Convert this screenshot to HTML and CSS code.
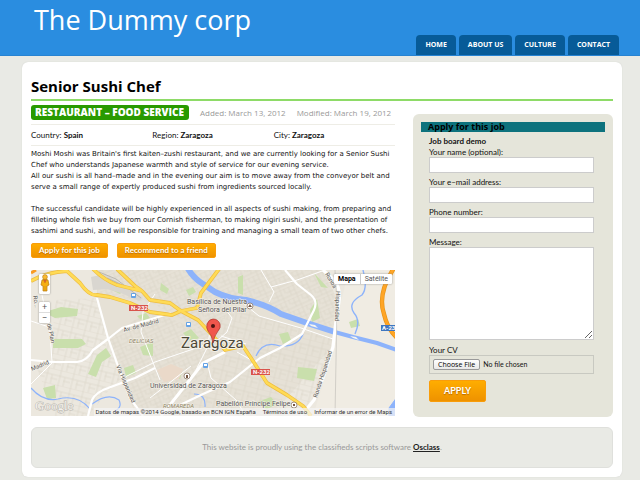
FILE: index.html
```html
<!doctype html>
<html lang="en">
<head>
    <meta charset="UTF-8">
    <meta name="viewport" content="width=device-width, initial-scale=1.0">
    <title>Senior Sushi Chef - The Dummy corp</title>
    <link rel="stylesheet" href="styles.css">
</head>
<body>
    <div class="header">
        <a class="logo" href="#">The Dummy corp</a>
        <nav class="nav">
            <a href="#">HOME</a>
            <a href="#">ABOUT US</a>
            <a href="#">CULTURE</a>
            <a href="#">CONTACT</a>
        </nav>
    </div>

    <div class="wrapper">
        <h1 class="title">Senior Sushi Chef</h1>
        <div class="columns">
            <div class="main">
                <div class="meta">
                    <strong class="category">RESTAURANT – FOOD SERVICE</strong>
                    <span>Added: March 13, 2012</span>
                    <span>Modified: March 19, 2012</span>
                </div>
                <div class="location">
                    <span>Country: <strong>Spain</strong></span>
                    <span>Region: <strong>Zaragoza</strong></span>
                    <span>City: <strong>Zaragoza</strong></span>
                </div>
                <div class="description">
                    <p>Moshi Moshi was Britain's first kaiten–zushi restaurant, and we are currently looking for a Senior Sushi<br>Chef who understands Japanese warmth and style of service for our evening service.<br>All our sushi is all hand–made and in the evening our aim is to move away from the conveyor belt and<br>serve a small range of expertly produced sushi from ingredients sourced locally.</p>
                    <p>The successful candidate will be highly experienced in all aspects of sushi making, from preparing and<br>filleting whole fish we buy from our Cornish fisherman, to making nigiri sushi, and the presentation of<br>sashimi and sushi, and will be responsible for training and managing a small team of two other chefs.</p>
                </div>
                <div class="actions">
                    <button class="btn" type="button">Apply for this job</button>
                    <button class="btn" type="button">Recommend to a friend</button>
                </div>

                <div class="map">
                    <svg class="map-canvas" viewBox="0 0 364 146" preserveAspectRatio="xMidYMid slice">
                        <defs>
                            <pattern id="blocks" width="14" height="12" patternUnits="userSpaceOnUse" patternTransform="rotate(-24)">
                                <path d="M0 0H14M0 5H9M0 9H14M4 0V9M9 0V12M13 0V5" fill="none" stroke="#d8d2c4" stroke-width=".6"/>
                            </pattern>
                            <pattern id="blocks2" width="13" height="15" patternUnits="userSpaceOnUse" patternTransform="rotate(14)">
                                <path d="M0 0H13M0 6H13M6 10H13M2 0V15M7 6V15" fill="none" stroke="#d8d2c4" stroke-width=".6"/>
                            </pattern>
                        </defs>
                        <rect width="364" height="146" fill="#ece8df"/>
                        <path d="M66 28L77 67L104 135V146H240L300 78L306 30L294 0H66Z" fill="#e6e1d6"/>
                        <path d="M66 0H294L306 30L300 60L206 30L182 66L119 32L66 24Z M77 67L119 40L182 66L196 80L129 146H105Z" fill="url(#blocks)"/>
                        <path d="M200 36L302 68L294 105L274 140L250 123L225 90L196 80L182 62Z M24 30L66 28L77 67L91 108L80 118L20 95Z M132 146L196 84L215 80L248 124L260 146Z M5 96L60 94L80 118L57 146H24Z" fill="url(#blocks2)"/>
                        <path d="M308 40L318 0H364V146H282L302 80Z" fill="#f0ece3"/>

                        <g fill="#c9dfac">
                            <path d="M17 41L30 37L47 39L46 46L24 48L16 44Z"/>
                            <path d="M22 69H51L55 74L47 78H22Z"/>
                            <path d="M66 85L75 78L80 86L71 92L65 107L57 104Z"/>
                            <path d="M74 10L92 20L89 24L72 16Z"/>
                            <path d="M106 46L115 43L119 48L111 51Z"/>
                            <path d="M109 77L122 72L122 86L112 85Z"/>
                            <path d="M93 98L102 95L105 103L95 107Z"/>
                            <path d="M130 13L138 19L136 24L129 20Z"/>
                            <path d="M155 20L162 17L165 22L158 26Z"/>
                            <path d="M152 63L160 59L168 68L160 72Z"/>
                            <path d="M207 7L212 5V25L207 23Z"/>
                            <path d="M279 40L286 29L289 48L281 52Z"/>
                            <path d="M248 64L257 62L260 70L252 74Z"/>
                            <path d="M267 97L286 99L283 111L266 108Z"/>
                            <path d="M283 3L297 18L290 17Z"/>
                            <path d="M142 103L151 102L149 109L141 108Z"/>
                            <path d="M12 118L24 115L25 128L16 129Z"/>
                            <path d="M318 52L327 49L329 56L320 58Z"/>
                            <path d="M226 132L240 127L246 134L236 139Z"/>
                        </g>
                        <path d="M126 100L140 94L152 99L148 109L133 112Z" fill="#ead9c9"/>
                        <path d="M60 7L74 4L96 18L112 28L108 31L90 23L76 19L62 20Z" fill="#d9d6d0"/>
                        <path d="M68 2L85 9L110 28M76 8L98 18" fill="none" stroke="#b9b7b1" stroke-width="1"/>

                        <!-- rivers -->
                        <g fill="none" stroke="#8db3fb" stroke-linejoin="round">
                            <path d="M156 -3Q162 8 172 14L184 22Q198 29 215 30Q236 35 250 44L276 53L304 62" stroke-width="6"/>
                            <path d="M300 61L322 67L346 73L366 80" stroke-width="4"/>
                            <path d="M332 0Q337 18 331 25Q316 33 323 43Q330 51 324 64" stroke-width="1.4"/>
                            <path d="M272 64Q267 77 249 76Q232 70 225 86" stroke-width="1.2"/>
                            <path d="M0 118Q12 132 27 129Q47 124 59 139M61 134Q77 122 88 130Q92 138 82 142M163 124Q175 124 174 137" stroke-width="1.2"/>
                            <path d="M366 127L358 138V146H366Z" fill="#8db3fb"/>
                        </g>
                        <path d="M278 54l6 1 3 3-7-2zM319 66l6 1 3 3-6-2z" fill="#f5f4ef"/>

                        <!-- minor roads -->
                        <g fill="none" stroke="#fff" stroke-width="1">
                            <path d="M11 25L19 62L21 92M0 51L18 57M22 92L0 114"/>
                            <path d="M124 24L112 42L110 62L121 90L129 110"/>
                            <path d="M180 52L177 76L165 100M187 70L196 62L201 48"/>
                            <path d="M201 48L195 40M212 33L228 46L270 58L302 69"/>
                            <path d="M92 108L124 92L177 74M119 128L160 96"/>
                            <path d="M176 92L180 108L205 130L215 146"/>
                            <path d="M240 17L266 10L294 0M230 0L243 22L238 32"/>
                            <path d="M190 66L215 74M222 91L206 82"/>
                        </g>
                        <!-- main roads -->
                        <g fill="none" stroke="#fff" stroke-width="2.2" stroke-linejoin="round">
                            <path d="M66 28L77 68L88 99L99 128L112 146"/>
                            <path d="M0 90L21 92H46Q56 91 62 80L77 69L91 58L124 48L140 43"/>
                            <path d="M57 146L61 130Q65 122 77 118L104 108L124 98"/>
                            <path d="M292 0L303 10Q310 18 308 32L305 51L302 77L292 108L283 130L270 146" stroke-width="3.2"/>
                            <path d="M254 0L266 14L280 25Q287 31 283 40L271 64L249 78L229 88L199 112L172 124L149 135"/>
                            <path d="M194 82L172 93L146 126L130 146" stroke-width="3"/>
                        </g>
                        <path d="M304 0L306 35L304 146" fill="none" stroke="#c9c6c0" stroke-width=".8"/>

                        <!-- highways -->
                        <g fill="none" stroke-linejoin="round">
                            <g stroke="#eebd42" stroke-width="3.8">
                                <path d="M0 11Q16 2 36 1L49 13Q58 26 66 25L79 27L99 33L119 42L141 45L150 41L166 38L170 23L188 -1"/>
                                <path d="M62 -1Q73 10 86 15L111 21L119 30L139 33L150 41L167 50L182 66L194 80L212 76L222 91L236 113L256 125L272 136L280 146M86 -1L104 16L111 21"/>
                            </g>
                            <g stroke="#ffdb55" stroke-width="2.4">
                                <path d="M0 11Q16 2 36 1L49 13Q58 26 66 25L79 27L99 33L119 42L141 45L150 41L166 38L170 23L188 -1"/>
                                <path d="M62 -1Q73 10 86 15L111 21L119 30L139 33L150 41L167 50L182 66L194 80L212 76L222 91L236 113L256 125L272 136L280 146M86 -1L104 16L111 21"/>
                            </g>
                            <path d="M363 -2Q346 24 353 44Q356 58 366 68" stroke="#e69417" stroke-width="4.4"/>
                            <path d="M363 -2Q346 24 353 44Q356 58 366 68" stroke="#ffa526" stroke-width="3"/>
                            <path d="M0 3L5 0" stroke="#f99b22" stroke-width="3"/>
                        </g>

                        <!-- road shields -->
                        <rect x="98" y="35" width="19" height="6" fill="#d9534b"/>
                        <text class="shield" x="100" y="40">N-232</text>
                        <rect x="220" y="99" width="19" height="6" fill="#d9534b"/>
                        <text class="shield" x="222" y="104">N-232</text>
                        <rect x="350" y="55" width="16" height="6" fill="#3f76bf"/>
                        <text class="shield" x="351" y="60">A-23</text>

                        <!-- stations -->
                        <g fill="#65a3e6">
                            <rect x="100" y="23" width="5" height="5" rx="1"/>
                            <rect x="155" y="52" width="5" height="5" rx="1"/>
                            <rect x="172" y="93" width="5" height="5" rx="1"/>
                        </g>
                        <path d="M101 24h3v2h-3zM156 53h3v2h-3zM173 94h3v2h-3z" fill="#fff"/>

                        <!-- places -->
                        <g fill="#fff" stroke="#8b7868" stroke-width=".8">
                            <circle cx="219" cy="36" r="3"/>
                            <circle cx="156" cy="106" r="3"/>
                            <circle cx="263" cy="135" r="3"/>
                        </g>
                        <path d="M217 37l2-3 2 3zM155 105h2v3h-2zM262 134h2v2h-2z" fill="#765642"/>

                        <g class="labels">
                            <text x="156" y="34">Basílica de Nuestra</text>
                            <text x="167" y="42">Señora del Pilar</text>
                            <text x="119" y="118">Universidad de Zaragoza</text>
                            <text x="185" y="136">Pabellón Príncipe Felipe</text>
                            <text class="area" x="98" y="73">DELICIAS</text>
                            <text class="area" x="132" y="138">ROMAREDA</text>
                            <text class="street" transform="translate(93 62) rotate(-15)">Av. de Madrid</text>
                            <text class="street" transform="translate(1 101) rotate(-23)">Madrid</text>
                            <text class="street" transform="translate(85 96) rotate(67)">Vía Hispanidad</text>
                            <text class="street" transform="translate(16 54) rotate(78)">de Plan</text>
                            <text class="street" transform="translate(2 26) rotate(80)">Ro...</text>
                            <text class="street" transform="translate(294 4) rotate(60)">Ronda</text>
                            <text class="street" transform="translate(305 21) rotate(92)">Hispanidad</text>
                            <text class="street" transform="translate(286 128) rotate(-72)">Ronda Hispanidad</text>
                            <text class="city" x="150" y="78">Zaragoza</text>
                        </g>

                        <!-- marker -->
                        <path d="M182 73Q181 65 177 61Q175 58 176 54Q178 49 182 49Q187 49 189 54Q190 58 187 61Q183 66 182 73Z" fill="#f0564c" stroke="#a8332d" stroke-width=".7"/>
                        <circle cx="182" cy="56" r="2" fill="#4c1512"/>

                        <text class="watermark" x="4" y="140">Google</text>
                    </svg>
                    <button class="pegman" type="button" aria-label="Street View">
                        <svg width="10" height="18" viewBox="0 0 10 18">
                            <path d="M2 6Q5 4 8 6L9 11L7 12V17H3V12L1 11Z" fill="#f6ae13" stroke="#b87b13" stroke-width=".7"/>
                            <circle cx="5" cy="3" r="2.4" fill="#f9bb32" stroke="#b87b13" stroke-width=".6"/>
                            <path d="M3.5 6H6.5L5 9ZM5 12V17" fill="#e2543b" stroke="#b87b13" stroke-width=".4"/>
                        </svg>
                    </button>
                    <div class="zoom">
                        <button type="button" aria-label="Zoom in">+</button>
                        <button type="button" aria-label="Zoom out">−</button>
                    </div>
                    <div class="map-type">
                        <button class="active" type="button">Mapa</button>
                        <button type="button">Satélite</button>
                    </div>
                    <div class="map-legal">
                        <span>Datos de mapas ©2014 Google, basado en BCN IGN España</span>
                        <a href="#">Términos de uso</a>
                        <a href="#">Informar de un error de Maps</a>
                    </div>
                </div>
            </div>

            <div class="sidebar">
                <h2>Apply for this job</h2>
                <form class="apply">
                    <h3>Job board demo</h3>
                    <label for="yourName">Your name (optional):</label>
                    <input class="field" type="text" id="yourName">
                    <label for="yourEmail">Your e–mail address:</label>
                    <input class="field" type="email" id="yourEmail">
                    <label for="phone">Phone number:</label>
                    <input class="field" type="tel" id="phone">
                    <label for="message">Message:</label>
                    <textarea class="field" id="message"></textarea>
                    <label for="cv">Your CV</label>
                    <input class="file" type="file" id="cv">
                    <button class="btn btn-big" type="submit">APPLY</button>
                </form>
            </div>
        </div>

        <div class="footer">This website is proudly using the classifieds scripts software <a href="#">Osclass</a>.</div>
    </div>
</body>
</html>
```

FILE: styles.css
```css
* {
    box-sizing: border-box;
    margin: 0;
    padding: 0;
}

body {
    background-color: #e9eae5;
    color: #111;
    font: 8px/11px Lato, "Open Sans", sans-serif;
}

button,
input,
textarea {
    font-family: inherit;
    font-size: 8px;
}

.header {
    display: flex;
    justify-content: space-between;
    height: 56px;
    padding: 0 21px 0 34px;
    background-color: #2a8de0;
    border-bottom: 1px solid #2783d2;
    font-family: "Open Sans", sans-serif;
}

.logo {
    color: #fff;
    font-size: 27px;
    line-height: 40px;
    text-decoration: none;
}

.nav {
    display: flex;
    align-items: flex-end;
    gap: 3px;
}

.nav a {
    padding: 0 9px;
    border-radius: 4px 4px 0 0;
    background-color: #075b98;
    color: #fff;
    font-size: 7px;
    font-weight: bold;
    line-height: 20px;
    text-decoration: none;
}

.wrapper {
    margin: 6px 18px 3px 22px;
    padding: 12px 9px 9px;
    border-radius: 6px;
    background-color: #fff;
    box-shadow: 0 0 1px #c4c5c0;
}

.title {
    padding-bottom: 1px;
    border-bottom: 2px solid #8edb67;
    font-family: "Open Sans", sans-serif;
    font-size: 15px;
    line-height: 24px;
    color: #000;
}

.columns {
    display: flex;
    align-items: flex-start;
    gap: 18px;
}

.main {
    flex: 1;
    min-width: 0;
}

.meta {
    display: flex;
    align-items: center;
    gap: 11px;
    padding: 4px 0;
    border-bottom: 1px solid #eeede6;
    color: #999;
    font-family: "Open Sans", sans-serif;
}

.category {
    padding: 0 5px 0 4px;
    border-radius: 3px;
    background-color: #299a00;
    color: #fff;
    font-size: 10px;
    font-weight: 800;
    line-height: 15px;
}

.location {
    display: grid;
    grid-template-columns: repeat(3, 1fr);
    padding: 5px 0 4px;
    border-bottom: 1px solid #eeede6;
}

.description {
    padding-top: 3px;
    font-family: "DejaVu Sans", sans-serif;
    font-size: 7px;
}

.description p {
    margin-bottom: 11px;
    white-space: nowrap;
}

.description p:last-child {
    margin-bottom: 6px;
}

.actions {
    display: flex;
    gap: 9px;
    margin-bottom: 12px;
}

.btn {
    height: 15px;
    padding: 0 7px;
    border: 1px solid #f99d0a;
    border-radius: 2px;
    background: linear-gradient(#ffad00, #ee9200);
    color: #fff;
    font-weight: bold;
    line-height: 13px;
    text-shadow: 0 1px 1px #b96b00;
}

.btn-big {
    height: 22px;
    padding: 0 14px;
    line-height: 20px;
    font-size: 9px;
}

/* map */
.map {
    position: relative;
    height: 146px;
    overflow: hidden;
}

.map-canvas {
    display: block;
    width: 100%;
    height: 100%;
    font-family: Roboto, sans-serif;
}

.labels text {
    fill: #555;
    stroke: #f5f2ea;
    stroke-width: 1px;
    paint-order: stroke;
    font-size: 7px;
}

.labels .area {
    fill: #8a8060;
    font-size: 6px;
    font-style: italic;
}

.labels .street {
    font-size: 6px;
}

.labels .city {
    fill: #4c4838;
    stroke-width: 2px;
    font-size: 15px;
}

.shield {
    fill: #fff;
    font-size: 6px;
    font-weight: bold;
}

.watermark {
    fill: #f4f2ed;
    stroke: #b5b2ab;
    stroke-width: 1px;
    paint-order: stroke;
    font-family: "Liberation Serif", serif;
    font-size: 13px;
}

.pegman,
.zoom,
.map-type {
    position: absolute;
    border: 0;
    border-radius: 1px;
    background-color: #fff;
    box-shadow: 0 0 2px #888;
}

.pegman {
    top: 4px;
    left: 8px;
    width: 11px;
    height: 20px;
}

.zoom {
    top: 32px;
    left: 8px;
    width: 11px;
}

.zoom button {
    display: block;
    width: 100%;
    border: 0;
    background: none;
    color: #555;
    font-size: 9px;
    line-height: 10px;
}

.zoom button + button {
    border-top: 1px solid #ddd;
}

.map-type {
    display: flex;
    top: 4px;
    right: 3px;
}

.map-type button {
    padding: 0 4px;
    border: 0;
    background: none;
    color: #555;
    font-family: Roboto, sans-serif;
    font-size: 7px;
    line-height: 10px;
}

.map-type button + button {
    border-left: 1px solid #ccc;
}

.map-type .active {
    color: #000;
    font-weight: bold;
}

.map-legal {
    display: flex;
    gap: 7px;
    position: absolute;
    right: 0;
    bottom: 0;
    padding: 0 3px 0 2px;
    background-color: rgba(245, 245, 245, .7);
    color: #333;
    font: 6px/8px Roboto, sans-serif;
    white-space: nowrap;
}

.map-legal a {
    color: #333;
    text-decoration: none;
}

/* sidebar */
.sidebar {
    width: 200px;
    margin-top: 13px;
    padding: 8px 8px 15px;
    border-radius: 6px;
    background-color: #e5e5da;
}

.sidebar h2 {
    padding-left: 7px;
    background-color: #0d727d;
    color: #000;
    font-family: "Open Sans", sans-serif;
    font-size: 9px;
    line-height: 10px;
}

.apply {
    display: flex;
    flex-direction: column;
    align-items: flex-start;
    padding: 4px 11px 0 8px;
}

.apply h3 {
    font-size: 8px;
    line-height: 11px;
}

.apply label {
    line-height: 10px;
}

.field {
    width: 100%;
    height: 16px;
    margin-bottom: 4px;
    padding: 1px 2px;
    border: 1px solid #ccc;
    background-color: #fff;
}

textarea.field {
    height: 93px;
    margin-bottom: 5px;
    resize: vertical;
}

.file {
    width: 100%;
    height: 19px;
    margin-bottom: 6px;
    padding: 3px;
    border: 1px solid #c8c9c1;
    font-size: 7px;
    line-height: 11px;
}

.file::file-selector-button {
    height: 11px;
    margin-right: 3px;
    padding: 0 4px;
    border: 1px solid #999;
    border-radius: 2px;
    background: linear-gradient(#fff, #e8e8e8);
    font: 7px/9px "Open Sans", sans-serif;
}

.footer {
    margin-top: 10px;
    border: 1px solid #dfe0dc;
    border-radius: 6px;
    background-color: #e9eae5;
    color: #999;
    line-height: 39px;
    text-align: center;
}

.footer a {
    color: #222;
    font-weight: bold;
}
```
